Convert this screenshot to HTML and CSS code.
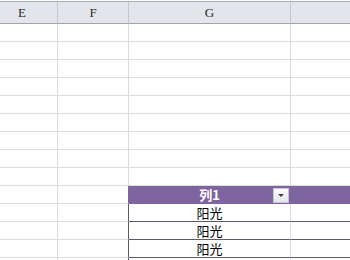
FILE: index.html
```html
<!DOCTYPE html>
<html lang="zh-CN">
<head>
    <meta charset="UTF-8">
    <meta name="viewport" content="width=device-width, initial-scale=1.0">
    <title>工作表</title>
    <link rel="stylesheet" href="styles.css">
</head>
<body>
    <div class="sheet">
        <!-- Column headers -->
        <div class="row col-head">
            <div class="cell">E</div>
            <div class="cell">F</div>
            <div class="cell">G</div>
            <div class="cell"></div>
        </div>

        <div class="row"><div class="cell"></div><div class="cell"></div><div class="cell"></div><div class="cell"></div></div>
        <div class="row"><div class="cell"></div><div class="cell"></div><div class="cell"></div><div class="cell"></div></div>
        <div class="row"><div class="cell"></div><div class="cell"></div><div class="cell"></div><div class="cell"></div></div>
        <div class="row"><div class="cell"></div><div class="cell"></div><div class="cell"></div><div class="cell"></div></div>
        <div class="row"><div class="cell"></div><div class="cell"></div><div class="cell"></div><div class="cell"></div></div>
        <div class="row"><div class="cell"></div><div class="cell"></div><div class="cell"></div><div class="cell"></div></div>
        <div class="row"><div class="cell"></div><div class="cell"></div><div class="cell"></div><div class="cell"></div></div>
        <div class="row"><div class="cell"></div><div class="cell"></div><div class="cell"></div><div class="cell"></div></div>
        <div class="row"><div class="cell"></div><div class="cell"></div><div class="cell"></div><div class="cell"></div></div>

        <!-- Table header -->
        <div class="row tbl-head">
            <div class="cell"></div>
            <div class="cell"></div>
            <div class="cell">
                列1
                <span class="filter-btn"><span class="arrow"></span></span>
            </div>
            <div class="cell"></div>
        </div>

        <div class="row tbl-row"><div class="cell"></div><div class="cell"></div><div class="cell">阳光</div><div class="cell"></div></div>
        <div class="row tbl-row"><div class="cell"></div><div class="cell"></div><div class="cell">阳光</div><div class="cell"></div></div>
        <div class="row tbl-row"><div class="cell"></div><div class="cell"></div><div class="cell">阳光</div><div class="cell"></div></div>
        <div class="row tbl-row"><div class="cell"></div><div class="cell"></div><div class="cell"></div><div class="cell"></div></div>
    </div>
</body>
</html>
```

FILE: styles.css
```css
body {
    margin: 0;
    background-color: #fff;
    font-family: "Noto Sans CJK SC", "Liberation Sans", sans-serif;
    color: #000;
    overflow: hidden;
}
.sheet {
    width: 350px;
    height: 260px;
    overflow: hidden;
    padding-top: 1px;
}
.row {
    display: grid;
    grid-template-columns: 71px 71px 162px 200px;
    margin-left: -13px;
    height: 18px;
}
.cell {
    border-right: 1px solid #dadcdd;
    border-bottom: 1px solid #dadcdd;
    font-size: 13px;
    line-height: 17px;
    text-align: center;
    white-space: nowrap;
}

/* Column header strip */
.col-head {
    height: 22px;
    border-top: 1px solid #a9b0b8;
    background-color: #e2e6eb;
}
.col-head .cell {
    font-family: "Liberation Serif", serif;
    font-size: 13px;
    line-height: 21px;
    color: #2a2a2a;
    border-right-color: #c3c8ce;
    border-bottom-color: #9ea4ab;
}

/* Table header */
.tbl-head .cell:nth-child(2) {
    border-right-color: #7f64a2;
}
.tbl-head .cell:nth-child(3),
.tbl-head .cell:nth-child(4) {
    background-color: #7f64a2;
    border-right-color: #7f64a2;
    border-bottom-color: #7f64a2;
}
.tbl-head .cell:nth-child(3) {
    position: relative;
    color: #fff;
    font-weight: bold;
}
.filter-btn {
    position: absolute;
    right: 1px;
    top: 2px;
    width: 14px;
    height: 13px;
    border: 1px solid #c9c4d4;
    background: linear-gradient(#fdfdfe, #e6e4ec);
    display: flex;
    align-items: center;
    justify-content: center;
}
.arrow {
    width: 0;
    height: 0;
    border-left: 3px solid transparent;
    border-right: 3px solid transparent;
    border-top: 3px solid #444;
}

/* Table body rows */
.tbl-row .cell:nth-child(2) {
    border-right-color: #5e5868;
}
.tbl-row .cell:nth-child(3),
.tbl-row .cell:nth-child(4) {
    border-bottom-color: #5e5868;
}
```
